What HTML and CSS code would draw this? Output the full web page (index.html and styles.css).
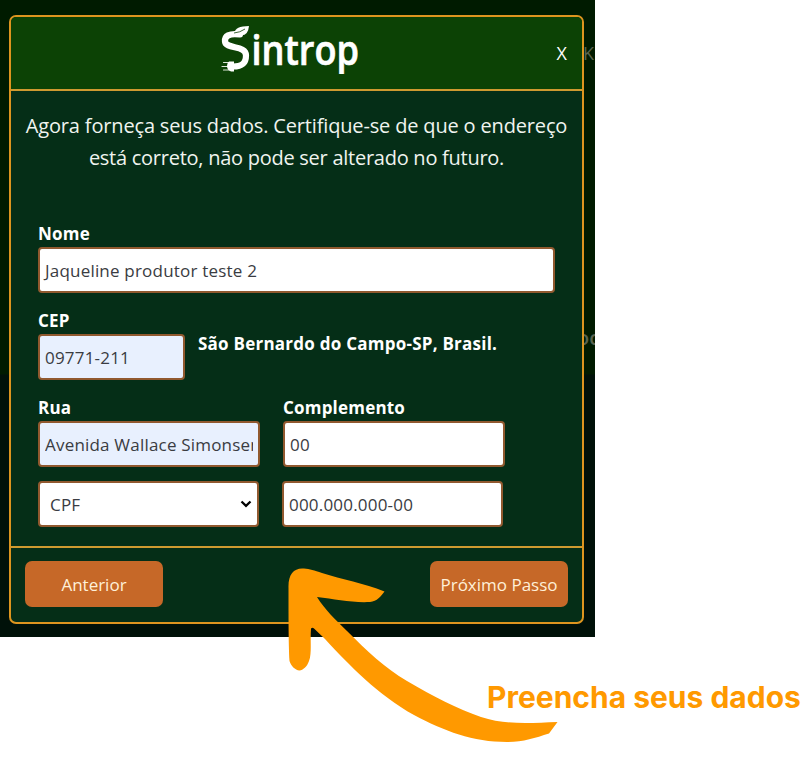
FILE: index.html
```html
<!DOCTYPE html>
<html lang="pt-BR">
<head>
<meta charset="utf-8">
<title>Sintrop</title>
<link rel="stylesheet" href="styles.css">
</head>
<body>
<main class="screen">
  <span class="behind behind-top">K</span>
  <span class="behind behind-mid">oc</span>
  <section class="modal">
    <header class="modal-header">
      <svg class="logo" width="140" height="50" viewBox="220 24 140 50">
        <g fill="none" stroke="#fff" stroke-linecap="round">
          <path d="M240 34.500C229 33 224.500 36 225 41.500C226 49.500 246 45 246 55.500C246 64 241 66.500 233 66.500" stroke-width="6.200"/>
          <path d="M223.500 62.500H230M222 66.500H230M223.500 70H230" stroke-width="1.200" stroke="#dbe6d8"/>
        </g>
        <path d="M229 61.500H234V71.500H231Q227 70 227 66Q227 63 229 61.500Z" fill="#fff"/>
        <path d="M234.500 33Q235 26 249 26Q248 37 239 35Z" fill="#fff"/>
        <path d="M234 33Q240 32.500 245 29" fill="none" stroke="#0c4205" stroke-width=".8"/>
        <text class="logo-text" x="251.500" y="64.500" textLength="107.500" lengthAdjust="spacingAndGlyphs">introp</text>
      </svg>
      <button class="close">X</button>
    </header>
    <div class="modal-body">
      <p class="intro"><span class="line-one">Agora forneça seus dados. Certifique-se de que o endereço</span><br><span class="line-two">está correto, não pode ser alterado no futuro.</span></p>
      <div class="form">
        <div class="group"><label>Nome</label><div class="field full">Jaqueline produtor teste 2</div></div>
        <div class="row cep-row">
          <div class="group"><label>CEP</label><div class="field cep filled">09771-211</div></div>
          <strong class="city">São Bernardo do Campo-SP, Brasil.</strong>
        </div>
        <div class="row street-row">
          <div class="group"><label>Rua</label><div class="field street filled"><span class="clip">Avenida Wallace Simonsen</span></div></div>
          <div class="group"><label>Complemento</label><div class="field extra">00</div></div>
        </div>
        <div class="row doc-row">
          <div class="field select">CPF<svg width="12" height="8" viewBox="0 0 12 8"><path d="M1.500 1.500L6 5.800L10.500 1.500" fill="none" stroke="#000" stroke-width="2.300"/></svg></div>
          <div class="field doc">000.000.000-00</div>
        </div>
      </div>
    </div>
    <footer class="modal-footer">
      <button class="btn prev">Anterior</button>
      <button class="btn next">Próximo Passo</button>
    </footer>
  </section>
</main>
<svg class="arrow" width="272" height="176" viewBox="287 567 272 176">
  <path fill="#ff9900" d="M288.500 588C288 574 294 567.500 304 568.500C310 569 314 570.500 322 573C342 579.500 364 583 384.500 591.500C381 596 377 601.500 370 602C352 603 335 599 317 597C325 610 335 619 347 631C367 651 385 668 407 681C434 697 458 709 481 717C505 725 530 723 557.500 722L549 733.500C535 738 523 742 507 742C473 742 444 731 414 715C378 695 349 665 325 639L314 628.500Q312.500 627 311 628.500C310 641 312 653 309 661C307 667 303 670 299.500 670.500C295 670 291 666 289.500 661C288.500 644 288.500 610 288.500 588Z"/>
</svg>
<p class="caption">Preencha seus dados</p>
</body>
</html>
```
FILE: styles.css
```css
* { box-sizing: border-box; }
body {
  position: relative;
  margin: 0;
  width: 802px;
  height: 766px;
  overflow: hidden;
  background: #fff;
  font-family: "Open Sans", "Noto Sans", sans-serif;
}
.screen {
  position: relative;
  width: 595px;
  height: 637px;
  padding: 15px 0 0 9px;
  overflow: hidden;
  background: linear-gradient(#001b00 0, #001b00 374px, #001109 375px, #001109 100%);
}
.behind { position: absolute; color: #58634f; font-size: 18px; line-height: 24px; }
.behind-top { left: 583px; top: 41px; }
.behind-mid { left: 577px; top: 326px; font-weight: 600; font-size: 20px; }
.modal {
  position: relative;
  display: flex;
  flex-direction: column;
  width: 575px;
  height: 609px;
  border: 2px solid #dd951f;
  border-radius: 7px;
  overflow: hidden;
  background: #052e17;
}
.modal-header {
  display: flex;
  align-items: flex-start;
  height: 74px;
  flex: none;
  padding: 7px 15px 0 209px;
  border-bottom: 2px solid #cf9a30;
  background: #0c4205;
}
.logo { flex: none; }
.logo-text {
  font: 600 42px "Open Sans", sans-serif;
  fill: #fff;
  stroke: #fff;
  stroke-width: .7px;
}
.close {
  margin: 17px 0 0 auto;
  padding: 0;
  border: 0;
  background: none;
  color: #fff;
  font: 18px/24px "Open Sans", sans-serif;
}
.modal-body { height: 455px; flex: none; color: #fff; }
.intro {
  margin: 19px 0 0;
  text-align: center;
  font-size: 20px;
  line-height: 32px;
  white-space: nowrap;
  color: #f0f4ef;
}
.line-one { letter-spacing: -.16px; }
.line-two { letter-spacing: -.26px; }
.form { padding: 47px 0 0 27px; }
.group { display: flex; flex-direction: column; }
label {
  height: 26px;
  font-size: 17px;
  line-height: 26px;
  font-weight: 700;
  letter-spacing: .2px;
  white-space: nowrap;
}
.field {
  display: flex;
  align-items: center;
  height: 46px;
  padding: 0 5px;
  border: 2px solid #91592f;
  border-radius: 4px;
  background: #fff;
  color: #3a3c42;
  font-size: 17px;
  letter-spacing: .2px;
  white-space: nowrap;
}
.filled { background: #e8f0fe; }
.full { width: 517px; }
.row { display: flex; }
.cep-row { margin-top: 15px; gap: 13px; }
.cep { width: 147px; }
.city {
  margin-top: 23px;
  font-size: 17px;
  line-height: 26px;
  font-weight: 700;
  letter-spacing: .24px;
  white-space: nowrap;
}
.street-row { margin-top: 15px; gap: 23px; }
.street, .extra { width: 222px; }
.clip { overflow: hidden; }
.doc-row { margin-top: 14px; gap: 23px; }
.select, .doc { width: 221px; }
.select { justify-content: space-between; padding-left: 10px; }
.modal-footer {
  flex: 1;
  display: flex;
  justify-content: space-between;
  padding: 13px 14px 0;
  border-top: 2px solid #cf9a30;
}
.btn {
  width: 138px;
  height: 46px;
  padding: 0;
  border: 0;
  border-radius: 7px;
  background: #c66828;
  color: #fff0d8;
  font: 500 17px "Open Sans", sans-serif;
  white-space: nowrap;
}
.arrow { position: absolute; left: 287px; top: 567px; }
.caption {
  position: absolute;
  left: 487px;
  top: 679px;
  margin: 0;
  color: #ff9900;
  font: 700 30px/36px Inter, sans-serif;
  white-space: nowrap;
}
```
